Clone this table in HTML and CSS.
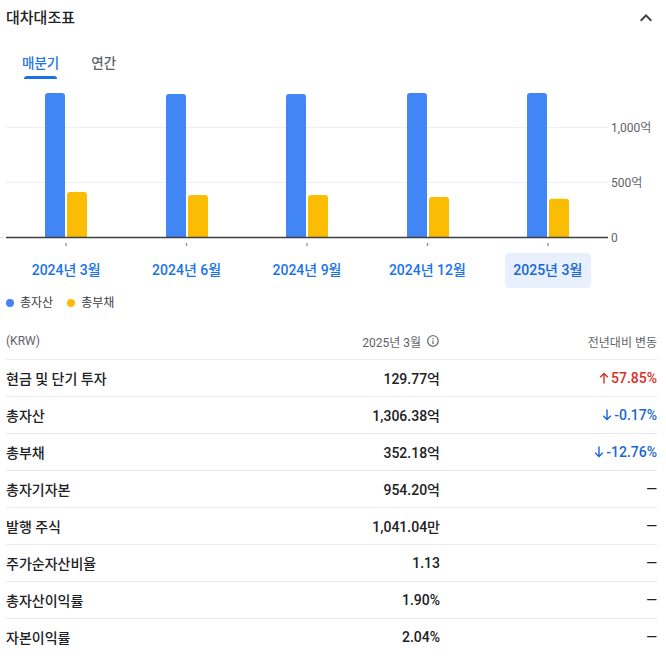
FILE: index.html
```html
<!DOCTYPE html>
<html lang="ko">
<head>
<meta charset="utf-8">
<title>대차대조표</title>
<link rel="stylesheet" href="styles.css">
</head>
<body>
<header class="head">
  <h2 class="title">대차대조표</h2>
  <svg class="chev" viewBox="0 0 24 24" width="24" height="24"><path d="M12 8l-6 6 1.41 1.41L12 10.83l4.59 4.58L18 14z" fill="#3c4043"/></svg>
</header>
<nav class="tabs">
  <span class="tab active">매분기</span>
  <span class="tab">연간</span>
</nav>
<svg class="chart" width="666" height="165" viewBox="0 85 666 165">
  <line x1="6" y1="127.5" x2="608" y2="127.5" stroke="#eeeff1" stroke-width="1"/>
  <line x1="6" y1="182.5" x2="608" y2="182.5" stroke="#eeeff1" stroke-width="1"/>
  <line x1="0" y1="237.5" x2="3" y2="237.5" stroke="#dadce0" stroke-width="1"/>
  <g fill="#4285f4">
    <path d="M45 237V96Q45 93 48 93H62Q65 93 65 96V237Z"/>
    <path d="M166 237V97Q166 94 169 94H183Q186 94 186 97V237Z"/>
    <path d="M286 237V97Q286 94 289 94H303Q306 94 306 97V237Z"/>
    <path d="M407 237V96Q407 93 410 93H424Q427 93 427 96V237Z"/>
    <path d="M527 237V96Q527 93 530 93H544Q547 93 547 96V237Z"/>
  </g>
  <g fill="#fbbc04">
    <path d="M67 237V195Q67 192 70 192H84Q87 192 87 195V237Z"/>
    <path d="M188 237V198Q188 195 191 195H205Q208 195 208 198V237Z"/>
    <path d="M308 237V198Q308 195 311 195H325Q328 195 328 198V237Z"/>
    <path d="M429 237V200Q429 197 432 197H446Q449 197 449 200V237Z"/>
    <path d="M549 237V201.7Q549 198.7 552 198.7H566Q569 198.7 569 201.7V237Z"/>
  </g>
  <line x1="6" y1="237.5" x2="608" y2="237.5" stroke="#3c4043" stroke-width="1.4"/>
  <g stroke="#80868b" stroke-width="1.2">
    <line x1="66" y1="243" x2="66" y2="246"/>
    <line x1="186.5" y1="243" x2="186.5" y2="246"/>
    <line x1="307" y1="243" x2="307" y2="246"/>
    <line x1="427.5" y1="243" x2="427.5" y2="246"/>
    <line x1="548" y1="243" x2="548" y2="246"/>
  </g>
  <g class="ylab">
    <text x="611" y="131.5">1,000억</text>
    <text x="611" y="186.5">500억</text>
    <text x="611" y="241.5">0</text>
  </g>
</svg>
<div class="xlabels">
  <span class="xl">2024년 3월</span>
  <span class="xl">2024년 6월</span>
  <span class="xl">2024년 9월</span>
  <span class="xl">2024년 12월</span>
  <span class="xl sel">2025년 3월</span>
</div>
<div class="legend">
  <span class="li"><i class="dot blue"></i>총자산</span>
  <span class="li"><i class="dot yellow"></i>총부채</span>
</div>
<div class="table">
  <div class="row hdr">
    <span class="c1">(KRW)</span>
    <span class="c2">2025년 3월 <svg class="info" viewBox="0 0 24 24" width="14" height="14"><path fill="#5f6368" d="M11 7h2v2h-2zm0 4h2v6h-2zm1-9C6.48 2 2 6.48 2 12s4.48 10 10 10 10-4.48 10-10S17.52 2 12 2zm0 18c-4.41 0-8-3.59-8-8s3.59-8 8-8 8 3.59 8 8-3.59 8-8 8z"/></svg></span>
    <span class="c3">전년대비 변동</span>
  </div>
  <div class="row">
    <span class="c1">현금 및 단기 투자</span>
    <span class="c2">129.77억</span>
    <span class="c3 up"><svg class="arr" viewBox="0 0 10 12" width="10" height="12"><path d="M5 11.5V1.5M1.2 5.2L5 1.4l3.8 3.8" fill="none" stroke="currentColor" stroke-width="1.4"/></svg>57.85%</span>
  </div>
  <div class="row">
    <span class="c1">총자산</span>
    <span class="c2">1,306.38억</span>
    <span class="c3 down"><svg class="arr" viewBox="0 0 10 12" width="10" height="12"><path d="M5 0.5V10.5M1.2 6.8L5 10.6l3.8-3.8" fill="none" stroke="currentColor" stroke-width="1.4"/></svg>-0.17%</span>
  </div>
  <div class="row">
    <span class="c1">총부채</span>
    <span class="c2">352.18억</span>
    <span class="c3 down"><svg class="arr" viewBox="0 0 10 12" width="10" height="12"><path d="M5 0.5V10.5M1.2 6.8L5 10.6l3.8-3.8" fill="none" stroke="currentColor" stroke-width="1.4"/></svg>-12.76%</span>
  </div>
  <div class="row">
    <span class="c1">총자기자본</span>
    <span class="c2">954.20억</span>
    <span class="c3">—</span>
  </div>
  <div class="row">
    <span class="c1">발행 주식</span>
    <span class="c2">1,041.04만</span>
    <span class="c3">—</span>
  </div>
  <div class="row">
    <span class="c1">주가순자산비율</span>
    <span class="c2">1.13</span>
    <span class="c3">—</span>
  </div>
  <div class="row">
    <span class="c1">총자산이익률</span>
    <span class="c2">1.90%</span>
    <span class="c3">—</span>
  </div>
  <div class="row last">
    <span class="c1">자본이익률</span>
    <span class="c2">2.04%</span>
    <span class="c3">—</span>
  </div>
</div>
</body>
</html>
```
FILE: styles.css
```css
html, body {
  margin: 0;
  padding: 0;
  background: #fff;
}
body {
  width: 666px;
  font-family: "Roboto", "Noto Sans CJK KR", sans-serif;
  color: #202124;
}
.head {
  height: 36px;
  display: flex;
  align-items: center;
  justify-content: space-between;
  padding: 0 8px 0 6px;
}
.title {
  margin: 0;
  font-size: 15px;
  font-weight: 500;
  line-height: 20px;
  color: #202124;
}
.chev {
  display: block;
}
.tabs {
  display: flex;
  gap: 32px;
  padding-left: 22px;
  height: 43px;
}
.tab {
  position: relative;
  padding-top: 19px;
  line-height: 16px;
  font-size: 13.5px;
  font-weight: 500;
  color: #5f6368;
}
.tab.active {
  color: #1a73e8;
}
.tab.active::after {
  content: "";
  position: absolute;
  left: 2px;
  right: 2px;
  bottom: 0;
  height: 3px;
  border-radius: 3px 3px 0 0;
  background: #1a73e8;
}
.chart {
  display: block;
  margin-top: 6px;
}
.ylab text {
  font-family: "Roboto", "Noto Sans CJK KR", sans-serif;
  font-size: 12px;
  fill: #5f6368;
}
.xlabels {
  display: grid;
  grid-template-columns: repeat(5, 1fr);
  width: 602px;
  margin-left: 6px;
  padding-top: 3px;
}
.xl {
  justify-self: center;
  width: 86px;
  height: 35px;
  line-height: 35px;
  text-align: center;
  border-radius: 4px;
  font-size: 14px;
  font-weight: 500;
  color: #1a73e8;
  white-space: nowrap;
}
.xl.sel {
  background: #e8f0fe;
  color: #1967d2;
}
.legend {
  display: flex;
  gap: 14px;
  margin-top: 8px;
  padding-left: 6px;
  height: 14px;
  line-height: 14px;
  font-size: 12px;
  color: #3c4043;
}
.li {
  display: flex;
  align-items: center;
  gap: 6px;
}
.dot {
  display: block;
  width: 8px;
  height: 8px;
  border-radius: 50%;
}
.dot.blue { background: #4285f4; }
.dot.yellow { background: #fbbc04; }
.table {
  margin-top: 13px;
  padding: 0 9px 0 6px;
}
.row {
  display: grid;
  grid-template-columns: 1fr 180px 217px;
  align-items: center;
  height: 36px;
  border-bottom: 1px solid #e8eaed;
  font-size: 14px;
  font-weight: 500;
  color: #202124;
}
.row.last {
  border-bottom: none;
}
.row.hdr {
  font-size: 12px;
  font-weight: 400;
  color: #5f6368;
}
.c2, .c3 {
  justify-self: end;
  display: flex;
  align-items: center;
  white-space: nowrap;
}
.info {
  display: block;
  margin-left: 5px;
}
.arr {
  display: block;
  margin-right: 2px;
}
.up { color: #d93025; }
.down { color: #1967d2; }
```
